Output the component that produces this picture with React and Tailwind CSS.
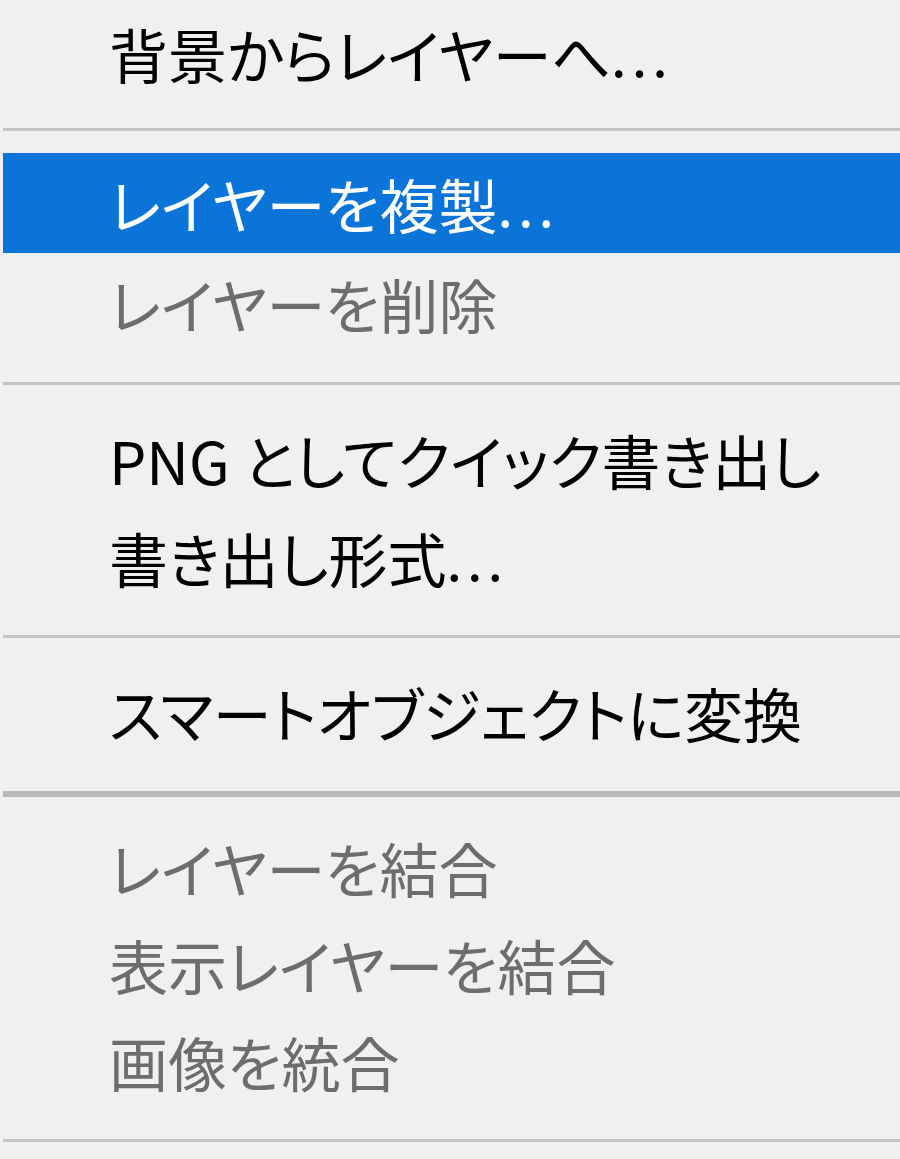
import React from 'react';

const Item = ({ label, dots, disabled, active, h = 'h-[98px]' }) => (
  <div
    className={`${h} flex items-center pl-[106px] whitespace-nowrap ${
      active ? 'bg-[#0a74d8] text-white' : disabled ? 'text-[#6d6d6d]' : 'text-black'
    }`}
  >
    {label}
    {dots && <span className="tracking-[5px] text-[56px]">...</span>}
  </div>
);

const Sep = ({ h, top, thick }) => (
  <div className={`${h} ${top}`}>
    <div className={`${thick ? 'h-[6px] bg-[#bababa]' : 'h-[3px] bg-[#c4c4c4]'}`} />
  </div>
);

export default function App() {
  return (
    <div
      className="w-[900px] h-[1159px] overflow-hidden bg-[#f0f0f0] pt-[4px] pl-[3px] text-[59px] leading-none [font-feature-settings:'palt'] font-['Noto_Sans_CJK_JP','Noto_Sans',sans-serif]"
    >
      <Item label="背景からレイヤーへ" dots />
      <Sep h="h-[51px]" top="pt-[26px]" />
      <Item label="レイヤーを複製" dots active h="h-[100px]" />
      <Item label="レイヤーを削除" disabled h="h-[100px]" />
      <Sep h="h-[57px]" top="pt-[29px]" />
      <Item label="PNG としてクイック書き出し" />
      <Item label="書き出し形式" dots />
      <Sep h="h-[57px]" top="pt-[29px]" />
      <Item label="スマートオブジェクトに変換" />
      <Sep h="h-[58px]" top="pt-[30px]" thick />
      <Item label="レイヤーを結合" disabled h="h-[97px]" />
      <Item label="表示レイヤーを結合" disabled h="h-[97px]" />
      <Item label="画像を統合" disabled h="h-[97px]" />
      <Sep h="h-[40px]" top="pt-[29px]" />
    </div>
  );
}
